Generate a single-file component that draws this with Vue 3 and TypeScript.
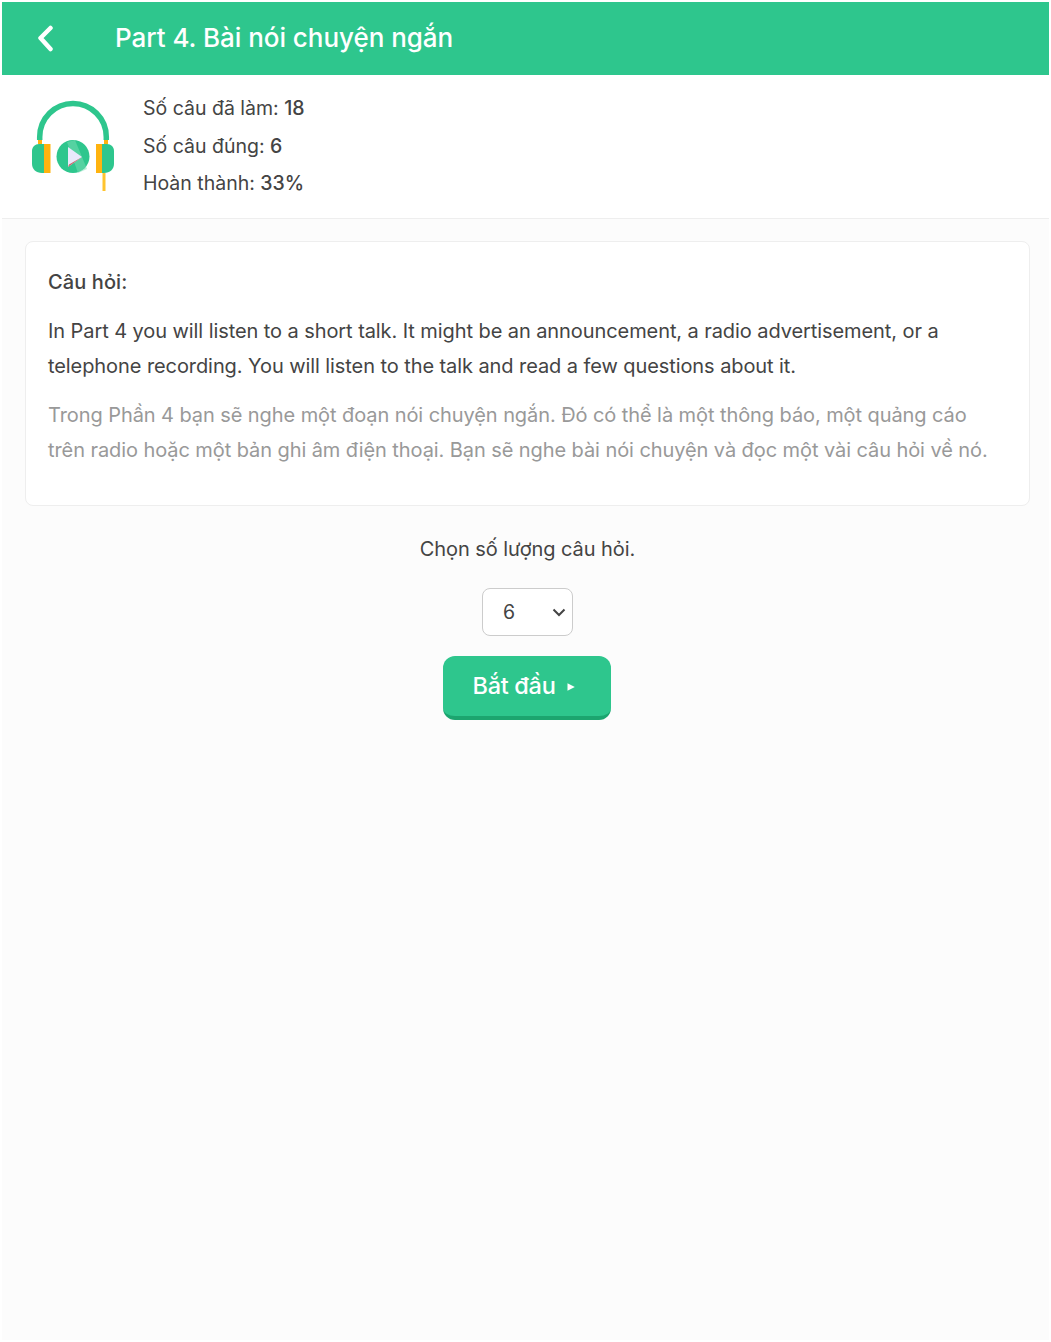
<script setup lang="ts">
import { ref } from 'vue'

const stats = [
  { label: 'Số câu đã làm:', value: '18' },
  { label: 'Số câu đúng:', value: '6' },
  { label: 'Hoàn thành:', value: '33%' },
]
const options = [6, 12, 18]
const count = ref(6)
</script>

<template>
  <div class="page">
    <header class="topbar">
      <button class="back" type="button" aria-label="Quay lại">
        <svg width="18" height="28" viewBox="0 0 18 28" fill="none">
          <path d="M14.500 3 L4.500 13 L14.500 24" stroke="#fff" stroke-width="4.500" stroke-linecap="round" stroke-linejoin="round" />
        </svg>
      </button>
      <h1 class="title">Part 4. Bài nói chuyện ngắn</h1>
    </header>

    <section class="summary">
      <svg class="logo" width="84" height="93" viewBox="0 0 84 93" fill="none">
        <path d="M8.700 41 V38 A33.300 33.500 0 0 1 75.300 38 V41" stroke="#2EC68D" stroke-width="5.500" />
        <rect x="7" y="41" width="4" height="4" fill="#FFB30F" />
        <rect x="73" y="41" width="4" height="4" fill="#FFB30F" />
        <path d="M13 45 H8 C4 45 1 48 1 52 V65 C1 70 5 74 11 74 H13 Z" fill="#2EC68D" />
        <rect x="13" y="45" width="6.500" height="29" fill="#FFB30F" />
        <path d="M71 45 H76 C80 45 83 48 83 52 V65 C83 70 79 74 73 74 H71 Z" fill="#2EC68D" />
        <rect x="65" y="45" width="6" height="29" fill="#FFB30F" />
        <rect x="71.500" y="74" width="3" height="18" fill="#FFC42E" />
        <circle cx="42" cy="57.500" r="16.500" fill="#2EC68D" />
        <path d="M36 43 L44 41 L56 70 L47 74 Z" fill="#7BDDB6" opacity="0.5" />
        <path d="M37 48 L51 58 L37 68 Z" fill="#E9E9FB" />
        <path d="M37 68 L51 58 L38 65.500 Z" fill="#C9656B" />
      </svg>
      <ul class="stats">
        <li v-for="s in stats" :key="s.label">{{ s.label }} <strong>{{ s.value }}</strong></li>
      </ul>
    </section>

    <main class="content">
      <article class="card">
        <h2 class="card-title">Câu hỏi:</h2>
        <p class="en">In Part 4 you will listen to a short talk. It might be an announcement, a radio advertisement, or a telephone recording. You will listen to the talk and read a few questions about it.</p>
        <p class="vi">Trong Phần 4 bạn sẽ nghe một đoạn nói chuyện ngắn. Đó có thể là một thông báo, một quảng cáo trên radio hoặc một bản ghi âm điện thoại. Bạn sẽ nghe bài nói chuyện và đọc một vài câu hỏi về nó.</p>
      </article>

      <div class="setup">
        <p class="prompt">Chọn số lượng câu hỏi.</p>
        <div class="select-wrap">
          <select v-model="count" class="select">
            <option v-for="o in options" :key="o" :value="o">{{ o }}</option>
          </select>
          <svg class="chevron" width="14" height="9" viewBox="0 0 14 9" fill="none">
            <path d="M1.500 1.500 L7 7 L12.500 1.500" stroke="#444" stroke-width="2" />
          </svg>
        </div>
        <button class="start" type="button">
          Bắt đầu
          <svg class="caret" width="8" height="8" viewBox="0 0 8 8"><path d="M0.500 0.300 L7.800 4 L0.500 7.700 Z" fill="#fff" /></svg>
        </button>
      </div>
    </main>
  </div>
</template>

<style>
html, body { margin: 0; background: #fff; }
</style>

<style scoped>
.page {
  margin: 2px;
  height: 1338px;
  background: #fcfcfc;
  color: #444;
  font-family: Inter, Roboto, sans-serif;
  display: flex;
  flex-direction: column;
}
.topbar {
  height: 73px;
  background: #2ec68d;
  display: flex;
  align-items: center;
  flex: none;
}
.back {
  width: 113px;
  padding: 0 0 0 34px;
  border: 0;
  background: none;
  display: flex;
  align-items: center;
}
.title {
  margin: 0 0 2px;
  color: #fff;
  font-size: 26px;
  font-weight: 500;
  letter-spacing: -0.04px;
}
.summary {
  height: 144px;
  box-sizing: border-box;
  flex: none;
  background: #fff;
  border-bottom: 1px solid #eee;
  display: flex;
  align-items: flex-start;
  padding: 15px 0 0 29px;
  gap: 28px;
}
.logo { margin-top: 9px; }
.stats {
  list-style: none;
  margin: 0;
  padding: 0;
  font-size: 19.500px;
  line-height: 37.500px;
}
.stats strong { font-weight: 500; }
.content { padding: 22px 19px 0 23px; }
.card {
  height: 265px;
  box-sizing: border-box;
  background: #fff;
  border: 1px solid #eee;
  border-radius: 8px;
  padding: 25px 22px;
}
.card-title {
  margin: 0 0 14px;
  font-size: 20px;
  line-height: 30px;
  font-weight: 500;
  letter-spacing: 0.1px;
}
.en, .vi {
  margin: 0 0 14px;
  font-size: 20px;
  line-height: 35px;
  letter-spacing: -0.08px;
}
.en { margin-top: 17px; }
.vi { color: #999; }
.setup {
  display: flex;
  flex-direction: column;
  align-items: center;
}
.prompt {
  margin: 26px 0 21px;
  font-size: 20px;
  line-height: 35px;
  letter-spacing: -0.07px;
}
.select-wrap {
  position: relative;
  width: 91px;
  height: 48px;
}
.select {
  appearance: none;
  width: 91px;
  height: 48px;
  box-sizing: border-box;
  padding-left: 20px;
  background: #fff;
  border: 1px solid #ccc;
  border-radius: 8px;
  color: #444;
  font: 19.500px Inter, Roboto, sans-serif;
}
.chevron {
  position: absolute;
  right: 7px;
  top: 20px;
  pointer-events: none;
}
.start {
  margin: 20px 1px 0 0;
  width: 168px;
  height: 64px;
  box-sizing: border-box;
  border: 0;
  border-bottom: 4px solid #1ca56f;
  border-radius: 12px;
  padding: 0 6px 2px 0;
  background: #2ec68d;
  color: #fff;
  font: 500 23.500px Inter, Roboto, sans-serif;
  letter-spacing: -0.3px;
}
.caret { margin-left: 6px; vertical-align: 3px; }
</style>
